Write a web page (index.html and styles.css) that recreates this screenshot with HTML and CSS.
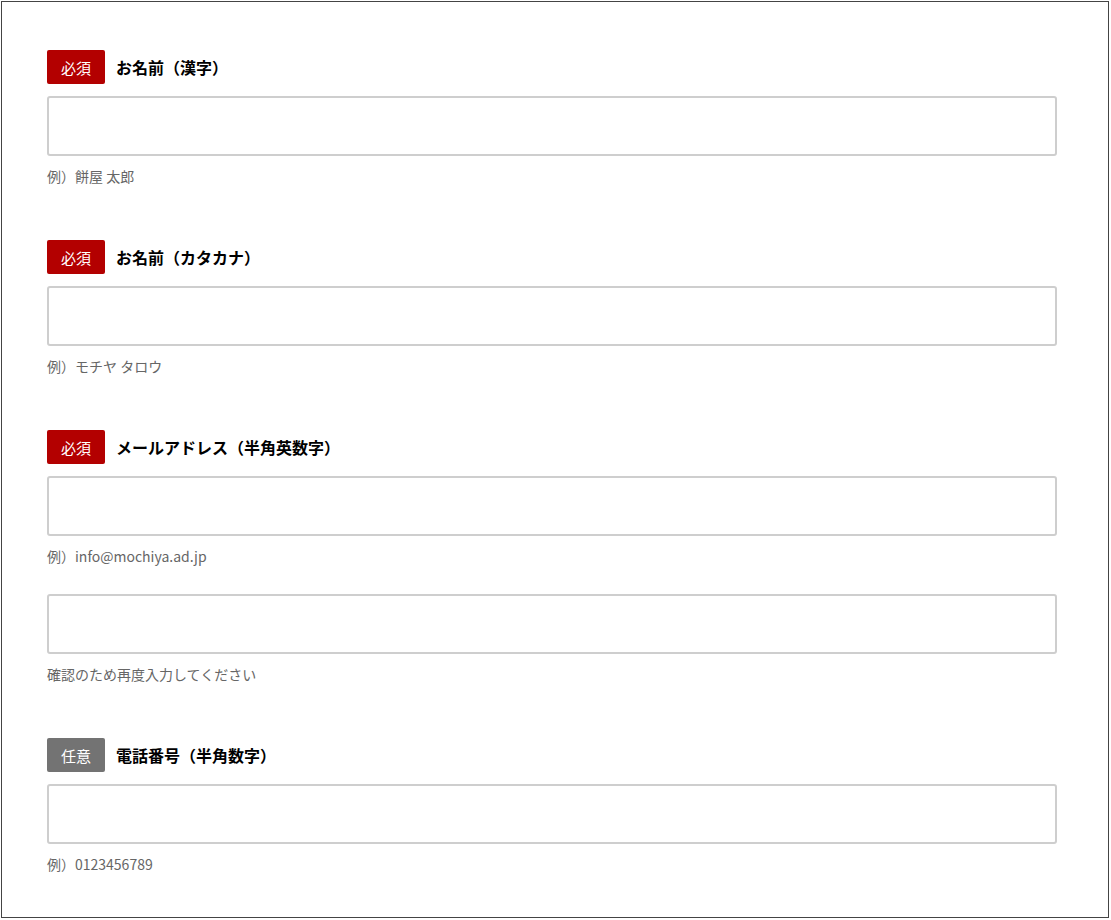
FILE: index.html
```html
<!DOCTYPE html>
<html lang="ja">
<head>
    <meta charset="UTF-8">
    <meta name="viewport" content="width=device-width, initial-scale=1.0">
    <title>お問い合わせ</title>
    <link rel="stylesheet" href="styles.css">
</head>
<body>
    <div class="frame">
        <form class="contact-form">
            <div class="field">
                <div class="field-head">
                    <span class="badge required">必須</span>
                    <label for="name">お名前（漢字）</label>
                </div>
                <input type="text" id="name">
                <p class="hint">例）餅屋 太郎</p>
            </div>

            <div class="field">
                <div class="field-head">
                    <span class="badge required">必須</span>
                    <label for="kana">お名前（カタカナ）</label>
                </div>
                <input type="text" id="kana">
                <p class="hint">例）モチヤ タロウ</p>
            </div>

            <div class="field">
                <div class="field-head">
                    <span class="badge required">必須</span>
                    <label for="email">メールアドレス（半角英数字）</label>
                </div>
                <input type="email" id="email">
                <p class="hint">例）info@mochiya.ad.jp</p>
                <input type="email" id="email-confirm" class="confirm">
                <p class="hint">確認のため再度入力してください</p>
            </div>

            <div class="field">
                <div class="field-head">
                    <span class="badge optional">任意</span>
                    <label for="tel">電話番号（半角数字）</label>
                </div>
                <input type="tel" id="tel">
                <p class="hint">例）0123456789</p>
            </div>
        </form>
    </div>
</body>
</html>
```

FILE: styles.css
```css
body {
    margin: 0;
    font-family: "Noto Sans CJK JP", "Noto Sans", sans-serif;
    background-color: #fff;
    color: #000;
}
.frame {
    margin: 1px;
    width: 1108px;
    height: 917px;
    border: 1px solid #444;
    box-sizing: border-box;
    padding: 48px 0 0 45px;
}
.contact-form {
    width: 1010px;
}
.field {
    margin-bottom: 52px;
}
.field:last-child {
    margin-bottom: 0;
}
.field-head {
    display: flex;
    align-items: center;
    gap: 11px;
    height: 34px;
}
.badge {
    display: inline-flex;
    align-items: center;
    justify-content: center;
    width: 58px;
    height: 34px;
    border-radius: 2px;
    color: #fff;
    font-size: 15px;
}
.badge.required {
    background-color: #b30000;
}
.badge.optional {
    background-color: #737373;
}
.field-head label {
    font-size: 16px;
    font-weight: bold;
    line-height: 1;
    margin-top: -1px;
}
.field input {
    display: block;
    width: 100%;
    height: 60px;
    box-sizing: border-box;
    margin-top: 12px;
    border: 2px solid #cecece;
    border-radius: 3px;
    font-size: 16px;
    padding: 0 12px;
}
.field input.confirm {
    margin-top: 26px;
}
.hint {
    margin: 8px 0 0;
    font-size: 14px;
    line-height: 24px;
    color: #666;
}
```
